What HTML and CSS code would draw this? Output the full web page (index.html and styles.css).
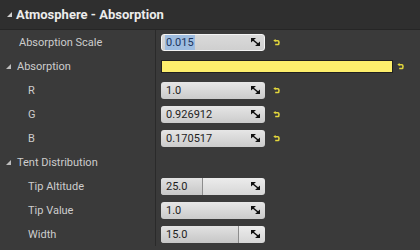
FILE: index.html
```html
<!DOCTYPE html>
<html>
<head>
<meta charset="utf-8">
<link rel="stylesheet" href="styles.css">
</head>
<body>
<div class="panel">
  <div class="header"><span class="tri"></span><span class="title">Atmosphere - Absorption</span></div>
  <div class="rows">
    <div class="row">
      <div class="name l1">Absorption Scale</div>
      <div class="value">
        <div class="box focus"><span class="num"><span class="sel">0.015</span></span><svg class="spin" viewBox="0 0 9 8"><path d="M0 0H5L0 4.5Z M9 8H4L9 3.5Z M2.2 1.2L7.8 5.8L6.8 6.8L1.2 2.2Z"/></svg></div>
        <svg class="reset" viewBox="0 0 7 7"><path d="M0.3 1.6L2.6 0V1H5.1Q6.8 1 6.8 3.6Q6.8 6.3 5.1 6.3H2.2V4.8H4.9Q5.2 4.8 5.2 3.6Q5.2 2.4 4.9 2.4H2.6V3.2Z"/></svg>
      </div>
    </div>
    <div class="row">
      <div class="name l0"><span class="tri"></span>Absorption</div>
      <div class="value">
        <div class="color"></div>
        <svg class="reset" viewBox="0 0 7 7"><path d="M0.3 1.6L2.6 0V1H5.1Q6.8 1 6.8 3.6Q6.8 6.3 5.1 6.3H2.2V4.8H4.9Q5.2 4.8 5.2 3.6Q5.2 2.4 4.9 2.4H2.6V3.2Z"/></svg>
      </div>
    </div>
    <div class="row">
      <div class="name l2">R</div>
      <div class="value">
        <div class="box"><span class="num">1.0</span><svg class="spin" viewBox="0 0 9 8"><path d="M0 0H5L0 4.5Z M9 8H4L9 3.5Z M2.2 1.2L7.8 5.8L6.8 6.8L1.2 2.2Z"/></svg></div>
        <svg class="reset" viewBox="0 0 7 7"><path d="M0.3 1.6L2.6 0V1H5.1Q6.8 1 6.8 3.6Q6.8 6.3 5.1 6.3H2.2V4.8H4.9Q5.2 4.8 5.2 3.6Q5.2 2.4 4.9 2.4H2.6V3.2Z"/></svg>
      </div>
    </div>
    <div class="row">
      <div class="name l2">G</div>
      <div class="value">
        <div class="box"><span class="num">0.926912</span><svg class="spin" viewBox="0 0 9 8"><path d="M0 0H5L0 4.5Z M9 8H4L9 3.5Z M2.2 1.2L7.8 5.8L6.8 6.8L1.2 2.2Z"/></svg></div>
        <svg class="reset" viewBox="0 0 7 7"><path d="M0.3 1.6L2.6 0V1H5.1Q6.8 1 6.8 3.6Q6.8 6.3 5.1 6.3H2.2V4.8H4.9Q5.2 4.8 5.2 3.6Q5.2 2.4 4.9 2.4H2.6V3.2Z"/></svg>
      </div>
    </div>
    <div class="row">
      <div class="name l2">B</div>
      <div class="value">
        <div class="box"><span class="num">0.170517</span><svg class="spin" viewBox="0 0 9 8"><path d="M0 0H5L0 4.5Z M9 8H4L9 3.5Z M2.2 1.2L7.8 5.8L6.8 6.8L1.2 2.2Z"/></svg></div>
        <svg class="reset" viewBox="0 0 7 7"><path d="M0.3 1.6L2.6 0V1H5.1Q6.8 1 6.8 3.6Q6.8 6.3 5.1 6.3H2.2V4.8H4.9Q5.2 4.8 5.2 3.6Q5.2 2.4 4.9 2.4H2.6V3.2Z"/></svg>
      </div>
    </div>
    <div class="row">
      <div class="name l0"><span class="tri"></span>Tent Distribution</div>
      <div class="value"></div>
    </div>
    <div class="row">
      <div class="name l2">Tip Altitude</div>
      <div class="value">
        <div class="box slider"><span class="fill" style="width:41px"></span><span class="num">25.0</span><svg class="spin" viewBox="0 0 9 8"><path d="M0 0H5L0 4.5Z M9 8H4L9 3.5Z M2.2 1.2L7.8 5.8L6.8 6.8L1.2 2.2Z"/></svg></div>
      </div>
    </div>
    <div class="row">
      <div class="name l2">Tip Value</div>
      <div class="value">
        <div class="box"><span class="num">1.0</span><svg class="spin" viewBox="0 0 9 8"><path d="M0 0H5L0 4.5Z M9 8H4L9 3.5Z M2.2 1.2L7.8 5.8L6.8 6.8L1.2 2.2Z"/></svg></div>
      </div>
    </div>
    <div class="row">
      <div class="name l2">Width</div>
      <div class="value">
        <div class="box slider"><span class="fill" style="width:77px"></span><span class="num">15.0</span><svg class="spin" viewBox="0 0 9 8"><path d="M0 0H5L0 4.5Z M9 8H4L9 3.5Z M2.2 1.2L7.8 5.8L6.8 6.8L1.2 2.2Z"/></svg></div>
      </div>
    </div>
  </div>
</div>
</body>
</html>
```

FILE: styles.css
```css
html, body {
  margin: 0;
  padding: 0;
  background: #3a3a3a;
}
.panel {
  width: 420px;
  height: 250px;
  overflow: hidden;
  background: #3a3a3a;
  font-family: Roboto, "Liberation Sans", sans-serif;
}
.header {
  height: 30px;
  box-sizing: border-box;
  display: flex;
  align-items: center;
  padding-left: 7px;
  background: #2f2f2f;
  border-bottom: 1px solid #262626;
}
.header .title {
  color: #ececec;
  font-weight: 700;
  font-size: 13px;
  margin-left: 4px;
}
.tri {
  display: inline-block;
  width: 0;
  height: 0;
  border-left: 5px solid transparent;
  border-bottom: 5px solid #cfcfcf;
}
.rows {
  display: flex;
  flex-direction: column;
}
.row {
  height: 24px;
  display: grid;
  grid-template-columns: 156px 1px 1fr;
}
.name {
  display: flex;
  align-items: center;
  color: #cdcdcd;
  font-size: 11px;
  border-right: 1px solid #2a2a2a;
  grid-column: 1;
}
.name.l0 { padding-left: 6px; }
.name.l0 .tri { margin-right: 6px; border-bottom-color: #bdbdbd; }
.name.l1 { padding-left: 19px; }
.name.l2 { padding-left: 28px; }
.value {
  grid-column: 3;
  display: flex;
  align-items: center;
  padding-left: 4px;
}
.box {
  position: relative;
  width: 104px;
  height: 17px;
  box-sizing: border-box;
  border-radius: 3px;
  background: linear-gradient(#e6e6e6, #cbcbcb);
  display: flex;
  align-items: center;
  justify-content: space-between;
  padding: 0 5px 0 5px;
  overflow: hidden;
}
.box.focus {
  border: 1px solid #f4f4f4;
  background: linear-gradient(#dadada, #cfcfcf);
  padding-left: 3px;
  padding-right: 4px;
}
.num {
  position: relative;
  font-size: 11px;
  color: #1e1e1e;
}
.sel {
  background: #9fbde0;
  color: #1c355e;
  padding: 1px 1px;
}
.spin {
  position: relative;
  width: 9px;
  height: 8px;
  fill: #111;
}
.reset {
  width: 7px;
  height: 7px;
  margin-left: 8px;
  fill: #e2d63c;
}
.color {
  width: 232px;
  height: 13px;
  box-sizing: border-box;
  background: #fdef6c;
  border: 1px solid #202020;
}
.color + .reset { margin-left: 4px; }
.slider {
  background: linear-gradient(#ececec, #d6d6d6);
}
.fill {
  position: absolute;
  left: 0;
  top: 0;
  bottom: 0;
  background: linear-gradient(#e2e2e2, #c6c6c6);
  border-right: 1px solid #8c8c8c;
}
```
